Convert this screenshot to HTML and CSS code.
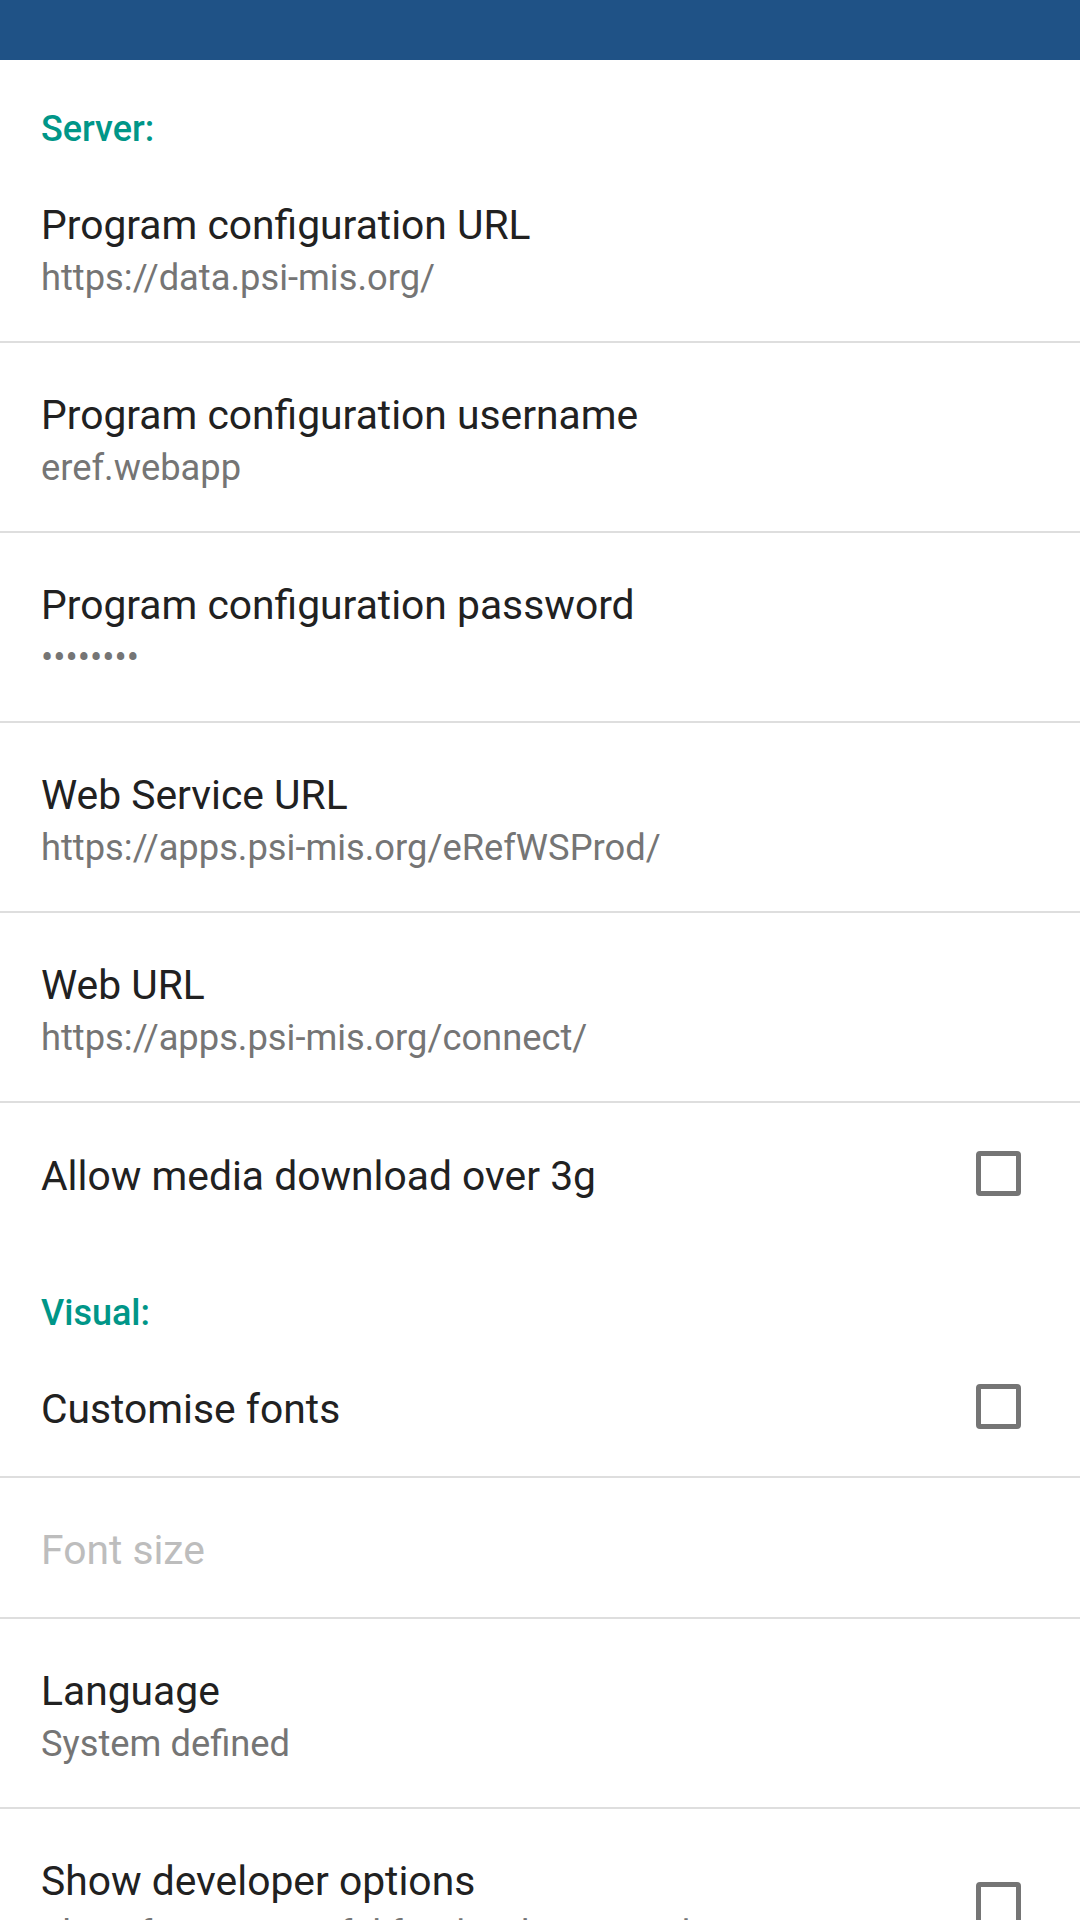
FILE: index.html
```html
<!DOCTYPE html>
<html lang="en">
<head>
<meta charset="utf-8">
<title>Settings</title>
<link rel="stylesheet" href="styles.css">
</head>
<body>
<header class="appbar"></header>
<main class="prefs">
  <div class="category">Server:</div>
  <div class="pref two-line">
    <div class="text">
      <div class="title">Program configuration URL</div>
      <div class="summary">https://data.psi-mis.org/</div>
    </div>
  </div>
  <div class="pref two-line">
    <div class="text">
      <div class="title">Program configuration username</div>
      <div class="summary">eref.webapp</div>
    </div>
  </div>
  <div class="pref two-line">
    <div class="text">
      <div class="title">Program configuration password</div>
      <div class="summary">••••••••</div>
    </div>
  </div>
  <div class="pref two-line">
    <div class="text">
      <div class="title">Web Service URL</div>
      <div class="summary">https://apps.psi-mis.org/eRefWSProd/</div>
    </div>
  </div>
  <div class="pref two-line">
    <div class="text">
      <div class="title">Web URL</div>
      <div class="summary">https://apps.psi-mis.org/connect/</div>
    </div>
  </div>
  <div class="pref one-line last">
    <div class="text">
      <div class="title">Allow media download over 3g</div>
    </div>
    <span class="checkbox"></span>
  </div>

  <div class="category">Visual:</div>
  <div class="pref one-line">
    <div class="text">
      <div class="title">Customise fonts</div>
    </div>
    <span class="checkbox"></span>
  </div>
  <div class="pref one-line">
    <div class="text">
      <div class="title disabled">Font size</div>
    </div>
  </div>
  <div class="pref two-line">
    <div class="text">
      <div class="title">Language</div>
      <div class="summary">System defined</div>
    </div>
  </div>
  <div class="pref two-line last">
    <div class="text">
      <div class="title">Show developer options</div>
      <div class="summary">Show features useful for developers and testers</div>
    </div>
    <span class="checkbox"></span>
  </div>
</main>
</body>
</html>
```

FILE: styles.css
```css
html, body {
  margin: 0;
  padding: 0;
  background: #ffffff;
}

body {
  font-family: Roboto, "Noto Sans", "Liberation Sans", sans-serif;
  width: 1080px;
  height: 1920px;
  overflow: hidden;
}

.appbar {
  height: 60px;
  background: #1f5286;
}

.prefs {
  display: flex;
  flex-direction: column;
}

.category {
  box-sizing: border-box;
  height: 93px;
  padding: 47px 41px 0 41px;
  font-size: 36px;
  line-height: 44px;
  font-weight: 500;
  color: #009688;
}

.pref {
  box-sizing: border-box;
  display: flex;
  align-items: center;
  padding: 0 59px 0 41px;
  border-bottom: 2px solid #dedede;
}

.pref.last {
  border-bottom: none;
}

.pref.two-line {
  height: 190px;
  align-items: flex-start;
  padding-top: 46px;
}

.pref.two-line .checkbox {
  align-self: center;
  margin-top: -46px;
}

.pref.one-line {
  height: 141px;
}

.pref.one-line .text {
  padding-top: 5px;
}

.text {
  flex: 1;
  min-width: 0;
}

.title {
  font-size: 40.8px;
  line-height: 52px;
  color: #212121;
  white-space: nowrap;
}

.title.disabled {
  color: #bdbdbd;
}

.summary {
  margin-top: 3px;
  font-size: 36.3px;
  line-height: 48px;
  color: #757575;
  white-space: nowrap;
}

.checkbox {
  box-sizing: border-box;
  flex: none;
  width: 45px;
  height: 45px;
  border: 5px solid #757575;
  border-radius: 4px;
}
```
